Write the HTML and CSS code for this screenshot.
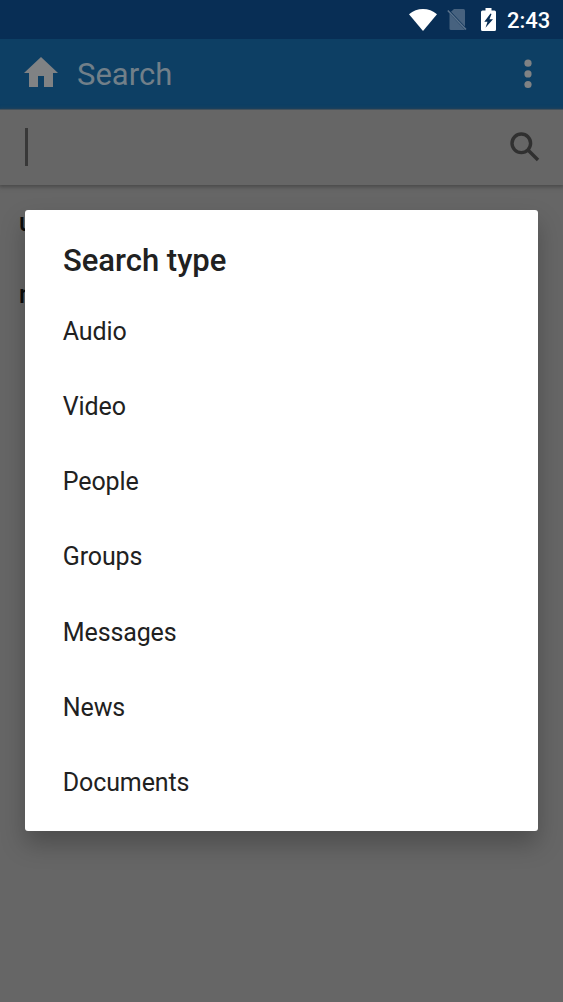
FILE: index.html
```html
<!DOCTYPE html>
<html lang="en">
<head>
<meta charset="utf-8">
<title>Search</title>
<link rel="stylesheet" href="styles.css">
</head>
<body>
<div class="screen">
  <div class="status">
    <svg class="wifi" viewBox="0 0 28 22"><path d="M0 5.2C8 -1.7 20 -1.7 28 5.2L14 22Z"/></svg>
    <svg class="sim" viewBox="0 0 20 23"><path d="M7 1H16.500Q18 1 18 2.500V18.500L4 3.700Z"/><path d="M2.500 5.500L18 22H4Q2.500 22 2.500 20.500Z"/><path class="slash" d="M.8 2.500L19 21.500"/></svg>
    <svg class="battery" viewBox="0 0 15 23"><path fill-rule="evenodd" d="M4.500 0H10.500V2.500H13.500Q15 2.500 15 4V21.500Q15 23 13.500 23H1.500Q0 23 0 21.500V4Q0 2.500 1.500 2.500H4.500ZM9.500 5.500L3.300 13.800H6.500L4.500 19.700L12 11.300H8.500L10.500 6Z"/></svg>
    <span class="time">2:43</span>
  </div>
  <header class="toolbar">
    <svg class="home" viewBox="0 0 34 30"><path d="M17 0L34 16H29V30H20V19H14V30H5V16H0Z"/></svg>
    <h1 class="heading">Search</h1>
    <svg class="more" viewBox="0 0 8 30"><circle cx="4" cy="4.200" r="3.600"/><circle cx="4" cy="14.900" r="3.600"/><circle cx="4" cy="25.500" r="3.600"/></svg>
  </header>
  <div class="searchbar">
    <span class="caret"></span>
    <svg class="magnifier" viewBox="0 0 30 30"><circle cx="11.300" cy="11.300" r="9.300"/><path d="M18.500 18.500L28 28"/></svg>
  </div>
  <main class="results">
    <div class="result">u</div>
    <div class="result">n</div>
  </main>
  <section class="dialog" role="dialog">
    <h2 class="title">Search type</h2>
    <ul class="options">
      <li class="option">Audio</li>
      <li class="option">Video</li>
      <li class="option">People</li>
      <li class="option">Groups</li>
      <li class="option">Messages</li>
      <li class="option">News</li>
      <li class="option">Documents</li>
    </ul>
  </section>
</div>
</body>
</html>
```
FILE: styles.css
```css
* { box-sizing: border-box; }

body {
  margin: 0;
  font-family: Roboto, sans-serif;
}

.screen {
  position: relative;
  height: 1002px;
  overflow: hidden;
  background: #666;
}

.status {
  display: flex;
  align-items: center;
  height: 39px;
  padding-left: 409px;
  background: #082e55;
  color: #fff;
  fill: #fff;
}

.wifi { width: 28px; height: 22px; }

.sim {
  width: 20px;
  height: 23px;
  margin-left: 10px;
  fill: #47627f;
}

.slash { stroke: #5b738c; stroke-width: 1.6; }

.battery { width: 15px; height: 23px; margin-left: 14px; }

.time {
  margin-left: 11px;
  padding-top: 2px;
  font-size: 22px;
  line-height: 26px;
  font-weight: 500;
}

.toolbar {
  display: flex;
  align-items: center;
  height: 71px;
  padding: 0 31px 0 24px;
  border-bottom: 1px solid #40586a;
  background: #0d3f64;
  fill: #808284;
}

.home { width: 34px; height: 30px; margin-top: -4px; }

.heading {
  flex: 1;
  margin: 0 0 0 19px;
  padding-top: 2px;
  font-size: 31px;
  line-height: 40px;
  font-weight: 400;
  color: #717f89;
}

.more { width: 8px; height: 30px; }

.searchbar {
  display: flex;
  align-items: center;
  justify-content: space-between;
  height: 75px;
  padding: 0 23px 2px 25px;
  box-shadow: 0 1px 4px 1px #484848;
  background: #666;
}

.caret { width: 3px; height: 38px; background: #383838; }

.magnifier {
  width: 30px;
  height: 30px;
  fill: none;
  stroke: #303030;
  stroke-width: 3.4;
}

.results { padding: 2px 19px; }

.result {
  height: 72px;
  font-size: 25px;
  font-weight: 500;
  line-height: 72px;
  color: #0d0d0d;
}

.dialog {
  position: absolute;
  top: 210px;
  left: 25px;
  width: 513px;
  height: 621px;
  border-radius: 3px;
  background: #fff;
  box-shadow: 0 13px 24px rgba(0, 0, 0, .25);
  color: #212121;
}

.title {
  margin: 0;
  padding: 31px 38px 3px;
  font-size: 31px;
  line-height: 40px;
  font-weight: 500;
}

.options { margin: 9.800px 0 0; padding: 0; list-style: none; }

.option {
  height: 75.2px;
  padding-left: 37.8px;
  font-size: 25px;
  letter-spacing: -.12px;
  line-height: 75px;
}
```
